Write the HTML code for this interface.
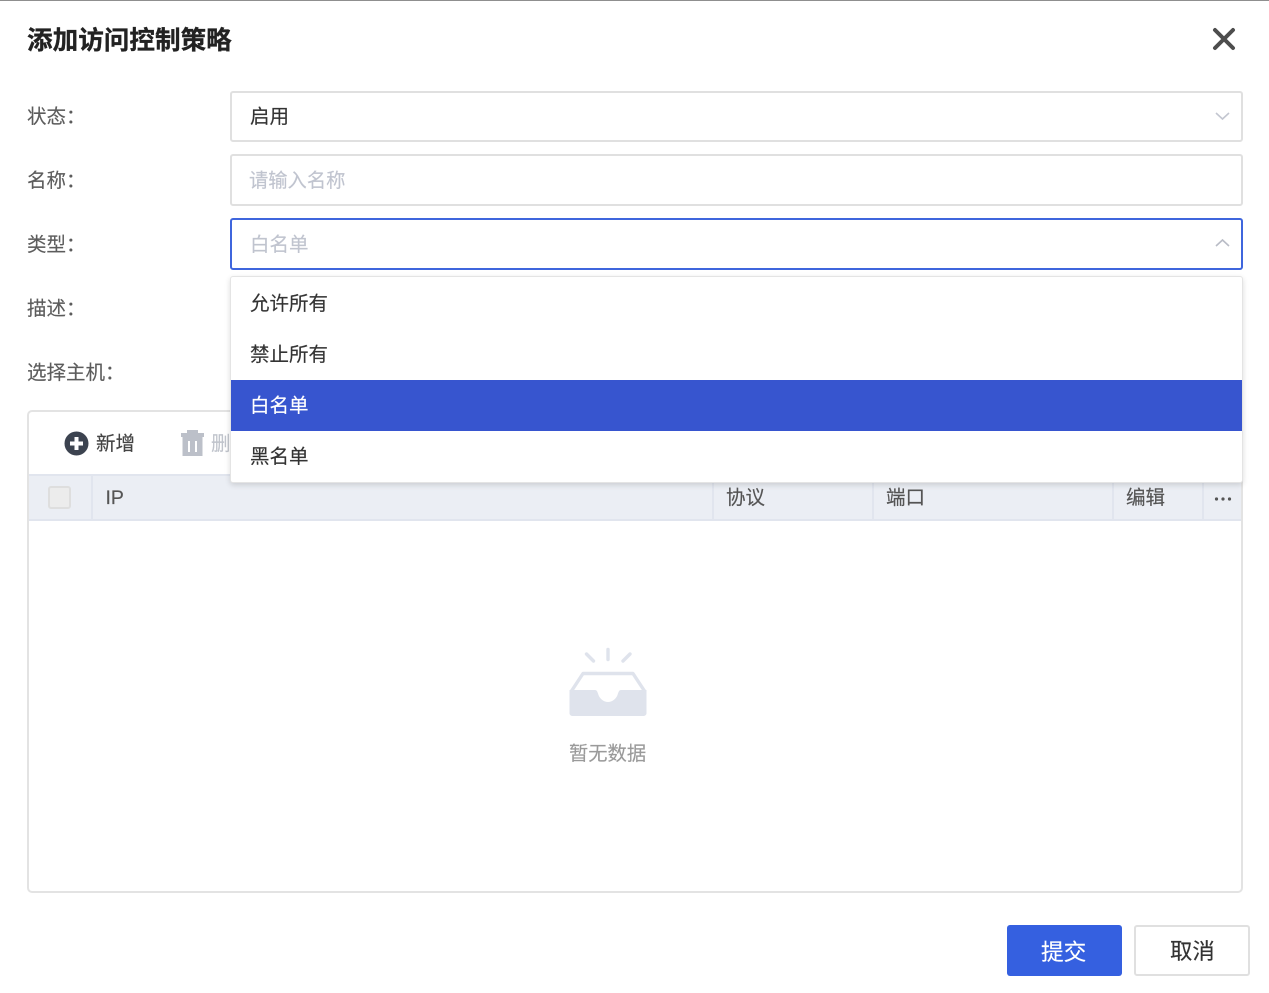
<!DOCTYPE html>
<html lang="zh">
<head>
<meta charset="utf-8">
<style>
html,body{margin:0;padding:0;width:1269px;height:993px;overflow:hidden;background:#fff;}
body{font-family:"Liberation Sans","Noto Sans CJK SC",sans-serif;position:relative;color:#333;}
#p{position:absolute;left:0;top:0;width:1269px;height:993px;filter:blur(.35px);}
.a{position:absolute;}
.t{position:absolute;font-size:19.5px;line-height:28px;height:28px;white-space:nowrap;-webkit-text-stroke:.15px currentColor;}
.lab{color:#5c5c5c;left:27px;}
.box{position:absolute;left:230px;width:1013px;box-sizing:border-box;height:51px;border:2px solid #e0e0e0;border-radius:3px;background:#fff;}
.opt{position:absolute;left:0;width:1011px;height:51px;}
.opt span{position:absolute;left:19px;font-size:19.5px;line-height:28px;color:#333;-webkit-text-stroke:.15px currentColor;}
.vl{position:absolute;top:475px;height:45px;width:2px;background:#e1e5ee;}
</style>
</head>
<body>
<div id="p">
<div class="a" style="left:0;top:0;width:1269px;height:1px;background:#8f8f8f"></div>
<div class="t" style="left:27px;top:25px;font-size:25.6px;line-height:32px;height:32px;font-weight:700;color:#222;-webkit-text-stroke:.3px currentColor">添加访问控制策略</div>
<svg class="a" style="left:1212px;top:27px" width="24" height="24" viewBox="0 0 24 24"><path d="M3 3L21 21M21 3L3 21" stroke="#4d4d4d" stroke-width="4" stroke-linecap="round" fill="none"/></svg>

<div class="t lab" style="top:103px">状态：</div>
<div class="t lab" style="top:167px">名称：</div>
<div class="t lab" style="top:231px">类型：</div>
<div class="t lab" style="top:295px">描述：</div>
<div class="t lab" style="top:359px">选择主机：</div>

<div class="box" style="top:91px"></div>
<div class="t" style="left:250px;top:103px;color:#333">启用</div>
<svg class="a" style="left:1215px;top:111px" width="15" height="10" viewBox="0 0 15 10"><path d="M1 2L7.500 8L14 2" stroke="#c3c6d0" stroke-width="1.600" fill="none"/></svg>

<div class="box" style="top:154px;height:52px"></div>
<div class="t" style="left:249px;top:168px;color:#c0c4cf;font-size:19.300px">请输入名称</div>

<div class="box" style="top:218px;border-color:#3f66dd;height:52px"></div>
<div class="t" style="left:250px;top:231px;color:#c0c4cf">白名单</div>
<svg class="a" style="left:1215px;top:238px" width="15" height="10" viewBox="0 0 15 10"><path d="M1 8L7.500 2L14 8" stroke="#b9bcc6" stroke-width="1.600" fill="none"/></svg>

<!-- table panel -->
<div class="a" style="left:27px;top:410px;width:1216px;height:483px;box-sizing:border-box;border:2px solid #e3e3e3;border-radius:5px;background:#fff"></div>
<div class="a" style="left:29px;top:474px;width:1212px;height:47px;box-sizing:border-box;background:#ebeef4;border-top:2px solid #e1e5ee;border-bottom:2px solid #e1e5ee"></div>
<svg class="a" style="left:64px;top:431px" width="25" height="25" viewBox="0 0 25 25"><circle cx="12.500" cy="12.500" r="12" fill="#3c4350"/><path d="M12.500 6V19M6 12.500H19" stroke="#fff" stroke-width="4"/></svg>
<div class="t" style="left:96px;top:430px;color:#444">新增</div>
<svg class="a" style="left:181px;top:430px" width="23" height="26" viewBox="0 0 23 26"><path d="M0 3H6V0H17V3H23V7H0Z" fill="#bcc0c9"/><path d="M1.500 7H21.500V26H1.500Z" fill="#bcc0c9"/><path d="M8 11V22M15 11V22" stroke="#fff" stroke-width="2"/></svg>
<div class="t" style="left:211px;top:430px;color:#c0c4cc;width:19px;overflow:hidden">删除</div>

<div class="a" style="left:48px;top:486px;width:23px;height:23px;box-sizing:border-box;background:#ececec;border:2px solid #dedede;border-radius:3px"></div>
<div class="vl" style="left:91px"></div>
<div class="vl" style="left:712px"></div>
<div class="vl" style="left:872px"></div>
<div class="vl" style="left:1112px"></div>
<div class="vl" style="left:1202px"></div>
<div class="t" style="left:105.500px;top:484px;color:#555">IP</div>
<div class="t" style="left:726px;top:484px;color:#555">协议</div>
<div class="t" style="left:886px;top:484px;color:#555">端口</div>
<div class="t" style="left:1126px;top:484px;color:#555">编辑</div>
<svg class="a" style="left:1214px;top:496px" width="18" height="6" viewBox="0 0 18 6"><circle cx="2.500" cy="3" r="1.600" fill="#555"/><circle cx="9" cy="3" r="1.600" fill="#555"/><circle cx="15.500" cy="3" r="1.600" fill="#555"/></svg>

<!-- empty state -->
<svg class="a" style="left:568px;top:647px" width="80" height="71" viewBox="0 0 80 71">
<path d="M40 2.500V12.500M18.500 7L25.500 14M62 7L55 14" stroke="#dfe3ec" stroke-width="3.400" stroke-linecap="round" fill="none"/>
<path d="M3.500 44L15 26.500H65L76.500 44" fill="none" stroke="#dfe3ec" stroke-width="3.400" stroke-linejoin="round"/>
<path d="M2 43H27C29 43 29.500 45 30.500 48C32 52 36 55 40 55C44 55 48 52 49.500 48C50.500 45 51 43 53 43H78.500V66C78.500 68 77 69 75 69H5C3 69 1.500 68 1.500 66V43Z" fill="#dfe3ec"/>
</svg>
<div class="t" style="left:569px;top:741px;color:#9a9a9a;font-size:19.300px">暂无数据</div>

<!-- dropdown -->
<div class="a" style="left:230px;top:276px;width:1013px;height:207px;box-sizing:border-box;background:#fff;border:1px solid #e4e4e4;border-radius:3px;box-shadow:0 2px 6px rgba(0,0,0,.14);overflow:hidden">
  <div class="opt" style="top:0"><span style="top:13px">允许所有</span></div>
  <div class="opt" style="top:52px"><span style="top:12px">禁止所有</span></div>
  <div class="opt" style="top:103px;background:#3755cf"><span style="top:12px;color:#fff">白名单</span></div>
  <div class="opt" style="top:154px"><span style="top:12px">黑名单</span></div>
</div>

<!-- footer buttons -->
<div class="a" style="left:1007px;top:925px;width:115px;height:51px;background:#3560e0;border-radius:3px"></div>
<div class="t" style="left:1041px;top:937px;font-size:22.700px;line-height:30px;height:30px;color:#fff">提交</div>
<div class="a" style="left:1134px;top:925px;width:116px;height:51px;box-sizing:border-box;border:2px solid #e0e0e0;border-radius:3px;background:#fff"></div>
<div class="t" style="left:1170px;top:937px;font-size:22.400px;line-height:30px;height:30px;color:#333">取消</div>
</div>
</body>
</html>
